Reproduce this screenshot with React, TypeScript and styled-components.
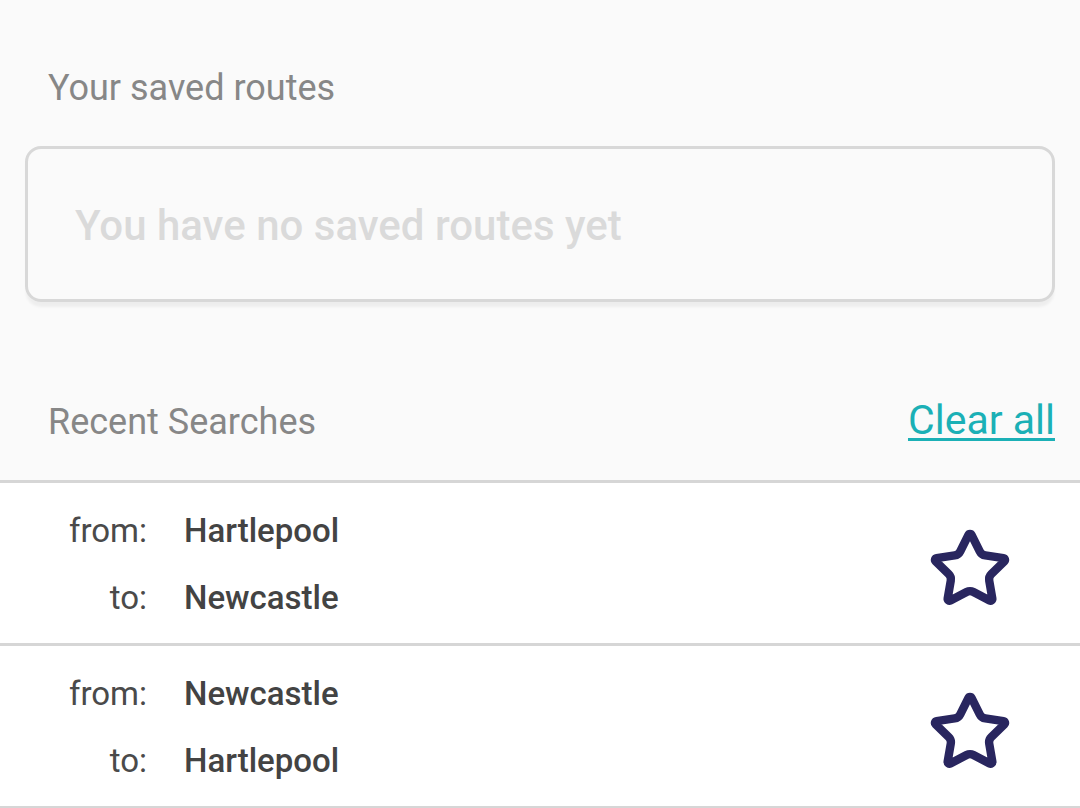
import React from 'react'
import styled, { createGlobalStyle } from 'styled-components'
import { Star } from 'lucide-react'

const GlobalStyle = createGlobalStyle`
  html, body {
    margin: 0;
    padding: 0;
    background: #fafafa;
    font-family: Roboto, "Liberation Sans", Arial, sans-serif;
  }
`

const Page = styled.div`
  width: 1080px;
  min-height: 808px;
  background: #fafafa;
  overflow: hidden;
`

const SectionTitle = styled.h2`
  margin: 67px 0 0;
  padding-left: 48px;
  font-size: 36px;
  line-height: 43px;
  font-weight: 400;
  color: #878787;
`

const EmptyCard = styled.div`
  margin: 36px 25px 0;
  height: 156px;
  box-sizing: border-box;
  border: 3px solid #d8d8d8;
  border-radius: 16px;
  box-shadow: 0 6px 3px -1px rgba(0, 0, 0, 0.05);
  display: flex;
  align-items: center;
  padding: 4px 0 0 47px;
`

const EmptyText = styled.span`
  font-size: 42px;
  line-height: 50px;
  font-weight: 500;
  color: #dadada;
`

const RecentHeader = styled.div`
  margin-top: 93px;
  padding: 0 25px 35px 48px;
  display: flex;
  align-items: baseline;
  justify-content: space-between;
`

const RecentTitle = styled.span`
  font-size: 36px;
  line-height: 43px;
  color: #878787;
`

const ClearAll = styled.a`
  font-size: 41px;
  line-height: 50px;
  color: #1bb0b6;
  text-decoration: underline;
  text-decoration-thickness: 3px;
  text-underline-offset: 4px;
  cursor: pointer;
`

const List = styled.ul`
  list-style: none;
  margin: 0;
  padding: 0;
  border-top: 3px solid #d6d6d6;
  background: #fff;
`

const Row = styled.li`
  height: 160px;
  border-bottom: 3px solid #d6d6d6;
  display: flex;
  align-items: center;
  justify-content: space-between;
  padding-right: 68px;
`

const Places = styled.div`
  display: grid;
  grid-template-columns: 147px auto;
  column-gap: 37px;
  padding-top: 2px;
`

const Label = styled.span`
  text-align: right;
  font-size: 33px;
  line-height: 67px;
  color: #4a4a4a;
`

const Place = styled.span`
  font-size: 33px;
  line-height: 67px;
  font-weight: 500;
  color: #434343;
`

const StarButton = styled.button`
  border: none;
  background: none;
  padding: 12px 0 0;
  margin: 0;
  display: flex;
  color: #29265f;
  cursor: pointer;
`

const searches = [
  { from: 'Hartlepool', to: 'Newcastle' },
  { from: 'Newcastle', to: 'Hartlepool' },
]

export default function App() {
  return (
    <Page>
      <GlobalStyle />
      <SectionTitle>Your saved routes</SectionTitle>
      <EmptyCard>
        <EmptyText>You have no saved routes yet</EmptyText>
      </EmptyCard>
      <RecentHeader>
        <RecentTitle>Recent Searches</RecentTitle>
        <ClearAll>Clear all</ClearAll>
      </RecentHeader>
      <List>
        {searches.map((s, i) => (
          <Row key={i}>
            <Places>
              <Label>from:</Label>
              <Place>{s.from}</Place>
              <Label>to:</Label>
              <Place>{s.to}</Place>
            </Places>
            <StarButton aria-label="Save route">
              <Star size={84} strokeWidth={2.4} />
            </StarButton>
          </Row>
        ))}
      </List>
    </Page>
  )
}
